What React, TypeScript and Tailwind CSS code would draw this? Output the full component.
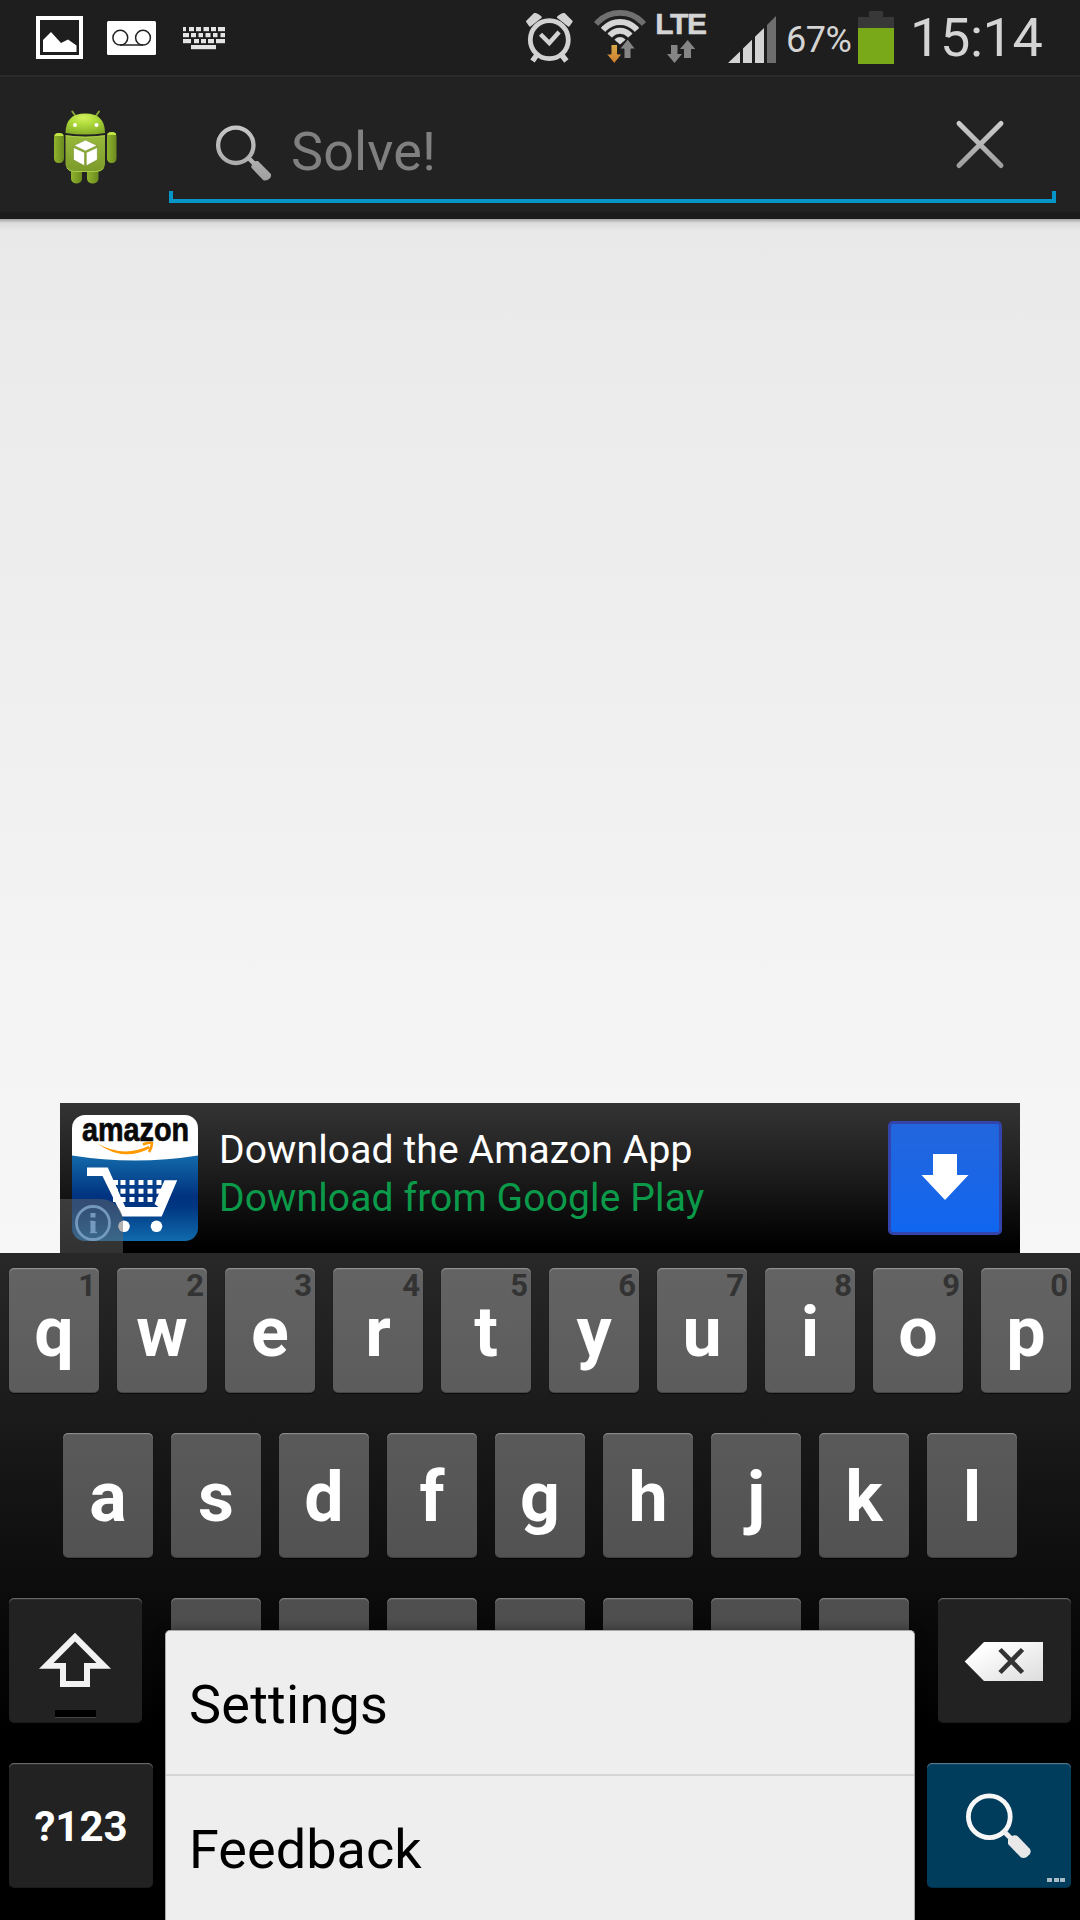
import type { ReactNode } from "react";

const topRow = ["q", "w", "e", "r", "t", "y", "u", "i", "o", "p"];
const homeRow = ["a", "s", "d", "f", "g", "h", "j", "k", "l"];

function GalleryIcon() {
  return (
    <svg className="ml-9 h-[43px] w-[47px]" viewBox="36 16 47 43">
      <path fill="#fff" fillRule="evenodd" d="M36 16h47v43H36zM40 20v35h39V20z" />
      <path fill="#fff" d="M43 52V40l8-8 10 11 7-3.5 8.5 6V52z" />
    </svg>
  );
}

function VoicemailIcon() {
  return (
    <svg className="ml-6 h-[34px] w-[49px]" viewBox="107 20 49 34">
      <rect x="107" y="20" width="49" height="34" rx="1.5" fill="#fff" />
      <g fill="none" stroke="#222" strokeWidth="1.5">
        <circle cx="120.3" cy="36.7" r="7.4" />
        <circle cx="143" cy="36.7" r="7.4" />
        <path d="M120 44h23" />
      </g>
    </svg>
  );
}

function KeyboardIcon() {
  const keys: [number, number, number][] = [
    [183, 186, 27], [189, 194, 27], [196, 201, 27], [203.5, 209, 27], [211, 216, 27], [218, 225, 27],
    [183, 189, 33], [191, 196, 33], [198.5, 203, 33], [205.5, 210.5, 33], [213, 217.5, 33], [220.5, 225, 33],
    [183, 191, 39], [194, 199, 39], [201, 206, 39], [208, 214, 39], [216, 225, 39],
    [191, 216, 45],
  ];
  return (
    <svg className="ml-6 h-[28px] w-[49px]" viewBox="180 24 49 28">
      {keys.map(([a, b, y]) => (
        <rect key={`${a}-${y}`} x={a} y={y} width={b - a} height="4.2" fill="#e4e4e4" />
      ))}
    </svg>
  );
}

function StatusIcons() {
  return (
    <svg className="h-[60px] w-[124px] shrink-0" viewBox="524 5 124 60">
      <defs>
        <linearGradient id="download" x1="0" y1="0" x2="0" y2="1">
          <stop offset="0" stopColor="#d8ab48" />
          <stop offset="1" stopColor="#cf7c2c" />
        </linearGradient>
        <clipPath id="wifi">
          <path d="M620 44.500 573.500 4.500h93z" />
        </clipPath>
      </defs>
      <g fill="none" stroke="#d2d2d2">
        <circle cx="549.3" cy="39.7" r="19" strokeWidth="4.8" />
        <path strokeWidth="4.4" d="m540.5 34.2 8.8 8.8 9.8-11" />
        <path strokeWidth="5.4" d="m537.5 54-5 7M561 54l5.4 7" />
      </g>
      <path
        fill="#d2d2d2"
        stroke="#d2d2d2"
        strokeWidth="2"
        strokeLinejoin="round"
        d="M530 25.6 527 21.500l7.500-7.500q2-.8 6.300 3.200zM568.700 25.600l3-4.100-7.500-7.500q-2-.8-6.300 3.200z"
      />
      <g fill="none" clipPath="url(#wifi)">
        <circle cx="620" cy="44" r="31.200" stroke="#707070" strokeWidth="5.800" />
        <circle cx="620" cy="44" r="22.100" stroke="#d6d6d6" strokeWidth="6" />
        <circle cx="620" cy="44" r="13.300" stroke="#d6d6d6" strokeWidth="6" />
        <circle cx="620" cy="44" r="3.500" stroke="#d6d6d6" strokeWidth="7" />
      </g>
      <path fill="url(#download)" stroke="#1e1e1e" strokeWidth="1" d="M611 44.500h6.500V54h4.500l-7.700 9.500L606.500 54h4.500z" />
      <path fill="#858585" stroke="#1e1e1e" strokeWidth="1" d="m627.700 39 7.800 10h-4.500v9.500h-7V49h-4.300z" />
    </svg>
  );
}

function LteArrows() {
  return (
    <svg className="h-[24px] w-[30px]" viewBox="666 40 30 24">
      <path fill="#858585" d="M671 45h6.500v9h4.500l-7.500 9-7.500-9h4zM687.700 40l7.500 9h-4.200v9h-7v-9h-4z" />
    </svg>
  );
}

function SignalIcon() {
  return (
    <svg className="ml-[22px] h-[47px] w-[48px]" viewBox="728 16 48 47">
      <path fill="#d4d4d4" d="M728 63l12-11.500V63zM743 48.500l9-8.800V63h-9zM755 36.800l9-8.800v35h-9z" />
      <path fill="#6e6e6e" d="M767 25l9-9v47h-9z" />
    </svg>
  );
}

function BatteryIcon() {
  return (
    <svg className="h-[53px] w-[36px]" viewBox="858 11 36 53">
      <path fill="#383838" d="M869 11h14v6h11v47h-36V17h11z" />
      <path fill="#79a818" d="M858 28h36v36h-36z" />
    </svg>
  );
}

function StatusBar() {
  return (
    <header className="flex h-[77px] items-start border-b-2 border-[#2b2b2b] bg-[#1e1e1e] text-[#d4d4d4]">
      <div className="flex h-[75px] w-[524px] items-center">
        <GalleryIcon />
        <VoicemailIcon />
        <KeyboardIcon />
      </div>
      <div className="pt-[5px]">
        <StatusIcons />
      </div>
      <div className="ml-[7px] flex w-[51px] flex-col items-center pt-[9px]">
        <span className="font-['Liberation_Sans'] text-[30px] leading-[30px] font-bold tracking-[-1.3px] [-webkit-text-stroke:0.5px_#d4d4d4]">LTE</span>
        <div className="mt-px">
          <LteArrows />
        </div>
      </div>
      <div className="pt-4">
        <SignalIcon />
      </div>
      <span className="ml-[10px] w-[72px] pt-[19px] text-[36px] leading-[42px] tracking-[-0.5px]">67%</span>
      <div className="pt-[11px]">
        <BatteryIcon />
      </div>
      <span className="ml-[16px] pt-[6px] text-[54px] leading-[64px] tracking-[-0.4px]">15:14</span>
    </header>
  );
}

function AndroidIcon() {
  return (
    <svg className="h-[78px] w-[66px]" viewBox="52 108 66 78">
      <defs>
        <linearGradient id="droid" x1="0" y1="0" x2="0" y2="1">
          <stop offset="0" stopColor="#97b93a" />
          <stop offset="1" stopColor="#7c9a2a" />
        </linearGradient>
        <radialGradient id="dome" cx="0.45" cy="0.2" r="0.8">
          <stop offset="0" stopColor="#d3f05c" />
          <stop offset="0.4" stopColor="#b0dc3c" />
          <stop offset="1" stopColor="#86ad28" />
        </radialGradient>
        <linearGradient id="limb" x1="0" y1="0" x2="1" y2="0">
          <stop offset="0" stopColor="#8fb32d" />
          <stop offset="1" stopColor="#6b8a1e" />
        </linearGradient>
      </defs>
      <path stroke="#86a53a" strokeWidth="2" strokeLinecap="round" d="m72.300 111.500 3.500 5M99 111.500l-3.500 5" />
      <g fill="url(#limb)">
        <rect x="54" y="133" width="10" height="30" rx="4.500" />
        <rect x="107" y="132" width="9.500" height="31" rx="4.500" />
        <rect x="71" y="162" width="11" height="21.500" rx="5" />
        <rect x="87" y="162" width="11.500" height="21.500" rx="5" />
      </g>
      <path fill="#c2e645" d="M54.500 136q0-3 4.500-3t4.500 3zM107.300 135q0-3 4.500-3t4.400 3z" />
      <path fill="url(#dome)" d="M65.500 133q0-19.500 19.800-19.500T105 133q-19.500 3-39.500 0z" />
      <path fill="url(#droid)" d="M65.500 135q20 3 39.500 0v29.500q-1 7-9 7.300H74.500q-8-.3-9-7.300z" />
      <path fill="none" stroke="#a9cc46" strokeWidth="1" d="M66 136q19.500 3 39 0M67 168q2 3.500 8 3.500h20.500q6 0 8-3.500" />
      <circle cx="75" cy="125" r="2" fill="#fff" />
      <circle cx="96.500" cy="125" r="2" fill="#fff" />
      <path fill="#fff" stroke="#6f8b25" strokeWidth=".5" d="m85.500 140 11.500 5.500-11.500 5.500L74 145.500zM73.500 147.500l11 5v13.300l-11-6zM97.300 147.500l-11 5v13.300l11-6z" />
    </svg>
  );
}

function ActionBar() {
  return (
    <div className="flex h-[142px] bg-[linear-gradient(#222222_0,#222222_134px,#1b1b1b_136px,#1a1a1a_142px)]">
      <div className="w-[169px] pt-[31px] pl-[52px]">
        <AndroidIcon />
      </div>
      <div className="relative h-[126px] w-[887px]">
        <div className="flex h-full items-start">
          <svg className="mt-[44px] ml-[43px] h-[64px] w-[64px]" viewBox="212 121 64 64">
            <defs>
              <linearGradient id="lens" gradientUnits="userSpaceOnUse" x1="0" y1="125" x2="0" y2="181">
                <stop offset="0" stopColor="#c8c8c8" />
                <stop offset="1" stopColor="#9f9f9f" />
              </linearGradient>
            </defs>
            <circle cx="235.800" cy="145.300" r="17.700" fill="none" stroke="url(#lens)" strokeWidth="4.300" />
            <path stroke="#b4b4b4" strokeWidth="4.500" d="m248 157.500 7 7" />
            <path fill="url(#lens)" d="m251.500 166 1-3.500q2.500-2 5.500-1.400l12.500 12.400q1.500 2.500-.5 4.700-3 3-6.700 2l-11.600-12.200q-.8-1-.2-2z" />
          </svg>
          <span className="mt-[39px] ml-[15px] text-[54px] leading-[72px] tracking-[0.1px] text-[#808080]">Solve!</span>
          <svg className="mt-[41px] ml-auto mr-[50px] h-[52px] w-[52px]" viewBox="954 118 52 52">
            <defs>
              <linearGradient id="cross" gradientUnits="userSpaceOnUse" x1="0" y1="120" x2="0" y2="168">
                <stop offset="0" stopColor="#cfcfcf" />
                <stop offset="1" stopColor="#9c9c9c" />
              </linearGradient>
            </defs>
            <path stroke="url(#cross)" strokeWidth="5" strokeLinecap="round" d="m959 123.500 42 42M1001 123.500l-42 42" />
          </svg>
        </div>
        <div className="absolute bottom-0 left-0 h-3 w-full border-x-4 border-b-4 border-[#0695c8]" />
      </div>
    </div>
  );
}

function AmazonIcon() {
  const grid = [1180, 1188.700, 1197];
  const cols = [113, 120.500, 129.500, 138.500, 147.500, 156.500];
  return (
    <svg className="h-[126px] w-[126px] overflow-visible" viewBox="72 1115 126 126">
      <defs>
        <linearGradient id="az" x1="0" y1="0" x2="0" y2="1">
          <stop offset="0" stopColor="#136aaa" />
          <stop offset="0.480" stopColor="#00327f" />
          <stop offset="0.600" stopColor="#003682" />
          <stop offset="1" stopColor="#106bad" />
        </linearGradient>
        <clipPath id="azclip">
          <rect x="72" y="1115" width="126" height="126" rx="13" />
        </clipPath>
      </defs>
      <g clipPath="url(#azclip)">
        <path fill="#fff" d="M72 1115h126v50H72z" />
        <path fill="url(#az)" d="M72 1155.500q63 10 126 0V1241H72z" />
        <path fill="#f90" d="M97.500 1143.500q26 14.500 51 2.500l2 2q-28 14.500-53-4.500z" />
        <path fill="none" stroke="#f90" strokeWidth="2.600" d="M143 1144.500q5-2.500 9-1.500 0 4-3 9" />
        <path fill="#fff" d="M87 1167.500h20.800l17.500 39.500h33.200l-4-3 10-23.800h12.700l-15.500 36.300H122.300L102.500 1176H87z" />
        {grid.map((y) => cols.map((x) => <rect key={`${x}-${y}`} x={x} y={y} width="5" height="5" fill="#fff" />))}
        <circle cx="124" cy="1226.300" r="5.800" fill="#fff" />
        <circle cx="156.500" cy="1226.300" r="5.800" fill="#fff" />
      </g>
      <text
        x="82"
        y="1140.800"
        textLength="107"
        lengthAdjust="spacingAndGlyphs"
        fontFamily="Liberation Sans"
        fontSize="33"
        fontWeight="700"
        fill="#0a0a0a"
        stroke="#0a0a0a"
        strokeWidth="0.700"
      >
        amazon
      </text>
    </svg>
  );
}

function AdBanner() {
  return (
    <div className="relative mx-auto flex h-[150px] w-[960px] items-center bg-[linear-gradient(#343434,#1b1b1b_50%,#000_96%)] pr-[18px] pl-3">
      <AmazonIcon />
      <div className="mb-2 ml-[21px] flex flex-col text-[39px] leading-[48px] whitespace-nowrap">
        <span className="tracking-[0.13px] text-white">Download the Amazon App</span>
        <span className="tracking-[0.13px] text-[#0b9a4a]">Download from Google Play</span>
      </div>
      <div className="ml-auto flex h-[114px] w-[114px] items-center justify-center rounded-[5px] border-[3px] border-[#3344ac] bg-linear-to-b from-[#2266dc] to-[#1066f0]">
        <svg className="mb-[2px] h-[48px] w-[50px]" viewBox="920 1153 50 48">
          <path fill="#fff" d="M933 1154h24v21h11.500L945 1200l-23.500-25H933z" />
        </svg>
      </div>
      <div className="absolute bottom-0 left-0 h-[54px] w-[63px] rounded-tr-[22px] bg-[#666]/50">
        <svg className="h-full w-full" viewBox="60 1199 63 54">
          <g fill="none" stroke="#7fa5c9" opacity=".85">
            <circle cx="93" cy="1223" r="16.500" strokeWidth="2.800" />
            <path strokeWidth="5" d="M93 1213v4.500M93 1221v12" />
            <path strokeWidth="1.500" d="M90 1221.500h3M90 1232.500h7" />
          </g>
        </svg>
      </div>
    </div>
  );
}

function LetterKey({ label, hint }: { label?: string; hint?: string }) {
  return (
    <div className="relative flex h-[125px] w-[90px] justify-center rounded-[5px] bg-white/28 shadow-[inset_0_1px_0_rgba(255,255,255,0.25),inset_0_2px_0_rgba(255,255,255,0.06),inset_0_-1px_0_rgba(0,0,0,0.25),0_1px_1px_rgba(0,0,0,0.55)]">
      {label && <span className="mt-[24px] text-[70px] leading-[80px] font-bold text-white">{label}</span>}
      {hint && <span className="absolute top-[1px] right-[3px] text-[31px] leading-[34px] font-bold text-[#333]">{hint}</span>}
    </div>
  );
}

function DarkKey({ wide, blue, children }: { wide?: boolean; blue?: boolean; children: ReactNode }) {
  return (
    <div
      className={`relative flex h-[125px] items-center justify-center rounded-[5px] shadow-[inset_0_1px_0_rgba(255,255,255,0.28),inset_0_2px_0_rgba(255,255,255,0.06),inset_0_-1px_0_rgba(0,0,0,0.2)] ${
        wide ? "w-[144px]" : "w-[133px]"
      } ${blue ? "bg-[#003d5c]" : "bg-[#222]"}`}
    >
      {children}
    </div>
  );
}

function Keyboard() {
  return (
    <div className="flex h-[667px] flex-col gap-[40px] bg-[linear-gradient(#282828,#000_480px)] px-[9px] pt-[15px]">
      <div className="flex justify-between">
        {topRow.map((k, i) => (
          <LetterKey key={k} label={k} hint={String((i + 1) % 10)} />
        ))}
      </div>
      <div className="flex justify-center gap-[18px]">
        {homeRow.map((k) => (
          <LetterKey key={k} label={k} />
        ))}
      </div>
      <div className="flex justify-between">
        <DarkKey>
          <svg className="h-[61px] w-[77px]" viewBox="37 1630 77 61">
            <path
              fill="#f2f2f2"
              fillRule="evenodd"
              d="M75 1632.700l36 36H90V1687H60v-18.300H39zM75 1641.500l-21.500 21.500H66v18h18v-18h12.500z"
            />
          </svg>
          <div className="absolute bottom-[5px] left-[46px] h-2 w-[41px] border-b border-[#444] bg-black" />
        </DarkKey>
        <div className="flex gap-[18px]">
          {Array.from({ length: 7 }, (_, i) => (
            <LetterKey key={i} />
          ))}
        </div>
        <DarkKey>
          <svg className="h-[43px] w-[83px]" viewBox="963 1639 83 43">
            <defs>
              <linearGradient id="del" x1="0" y1="0" x2="1" y2="1">
                <stop offset="0.200" stopColor="#fff" />
                <stop offset="1" stopColor="#dcdcdc" />
              </linearGradient>
            </defs>
            <path fill="url(#del)" d="M964.700 1661.500 984 1642h59v39h-59z" />
            <path stroke="#333" strokeWidth="4.600" d="m1000 1649.500 22.500 23M1022.500 1649.500l-22.500 23" />
          </svg>
        </DarkKey>
      </div>
      <div className="flex justify-between">
        <DarkKey wide>
          <span className="mt-[2px] text-[42px] leading-[52px] font-bold text-white">?123</span>
        </DarkKey>
        <DarkKey wide blue>
          <svg className="h-full w-full" viewBox="927 1763 144 125">
            <circle cx="989.300" cy="1816.700" r="20.900" fill="none" stroke="#f7f7f7" strokeWidth="4.800" />
            <path stroke="#eee" strokeWidth="5" d="m1003.500 1831 8 8" />
            <path fill="#e8e8e8" d="m1008 1839.500 4-3.500q3-1.500 5.500 0l12.500 13q1.500 3-.5 5.500l-3 2.800q-2.500 1.300-5.500.3l-13-13.600z" />
            <path fill="#a9bbc6" d="M1047 1878h5v4h-5zM1054 1878h5v4h-5zM1060 1878h5v4h-5z" />
          </svg>
        </DarkKey>
      </div>
    </div>
  );
}

function OverflowMenu() {
  return (
    <div className="absolute top-[1630px] left-[165px] flex h-[290px] w-[750px] flex-col rounded-t-[5px] border border-b-0 border-[#a8a8a8] bg-[#eeeeee] text-[54px] text-black shadow-[0_0_12px_rgba(0,0,0,0.45)]">
      <div className="flex h-[145px] items-center border-b-2 border-[#d5d5d5] pt-[4px] pl-[23px]">
        <span className="leading-[64px] tracking-[0.25px]">Settings</span>
      </div>
      <div className="flex h-[144px] items-center pt-[4px] pl-[23px]">
        <span className="leading-[64px] tracking-[0.05px]">Feedback</span>
      </div>
    </div>
  );
}

export default function App() {
  return (
    <div className="relative flex h-[1920px] w-[1080px] flex-col overflow-hidden font-['Roboto',sans-serif]">
      <StatusBar />
      <ActionBar />
      <main className="flex h-[1034px] flex-col justify-end bg-[linear-gradient(rgba(0,0,0,0.3),rgba(0,0,0,0.06)_4px,transparent_12px),linear-gradient(#e9e9e9,#f7f7f7)]">
        <AdBanner />
      </main>
      <Keyboard />
      <OverflowMenu />
    </div>
  );
}
